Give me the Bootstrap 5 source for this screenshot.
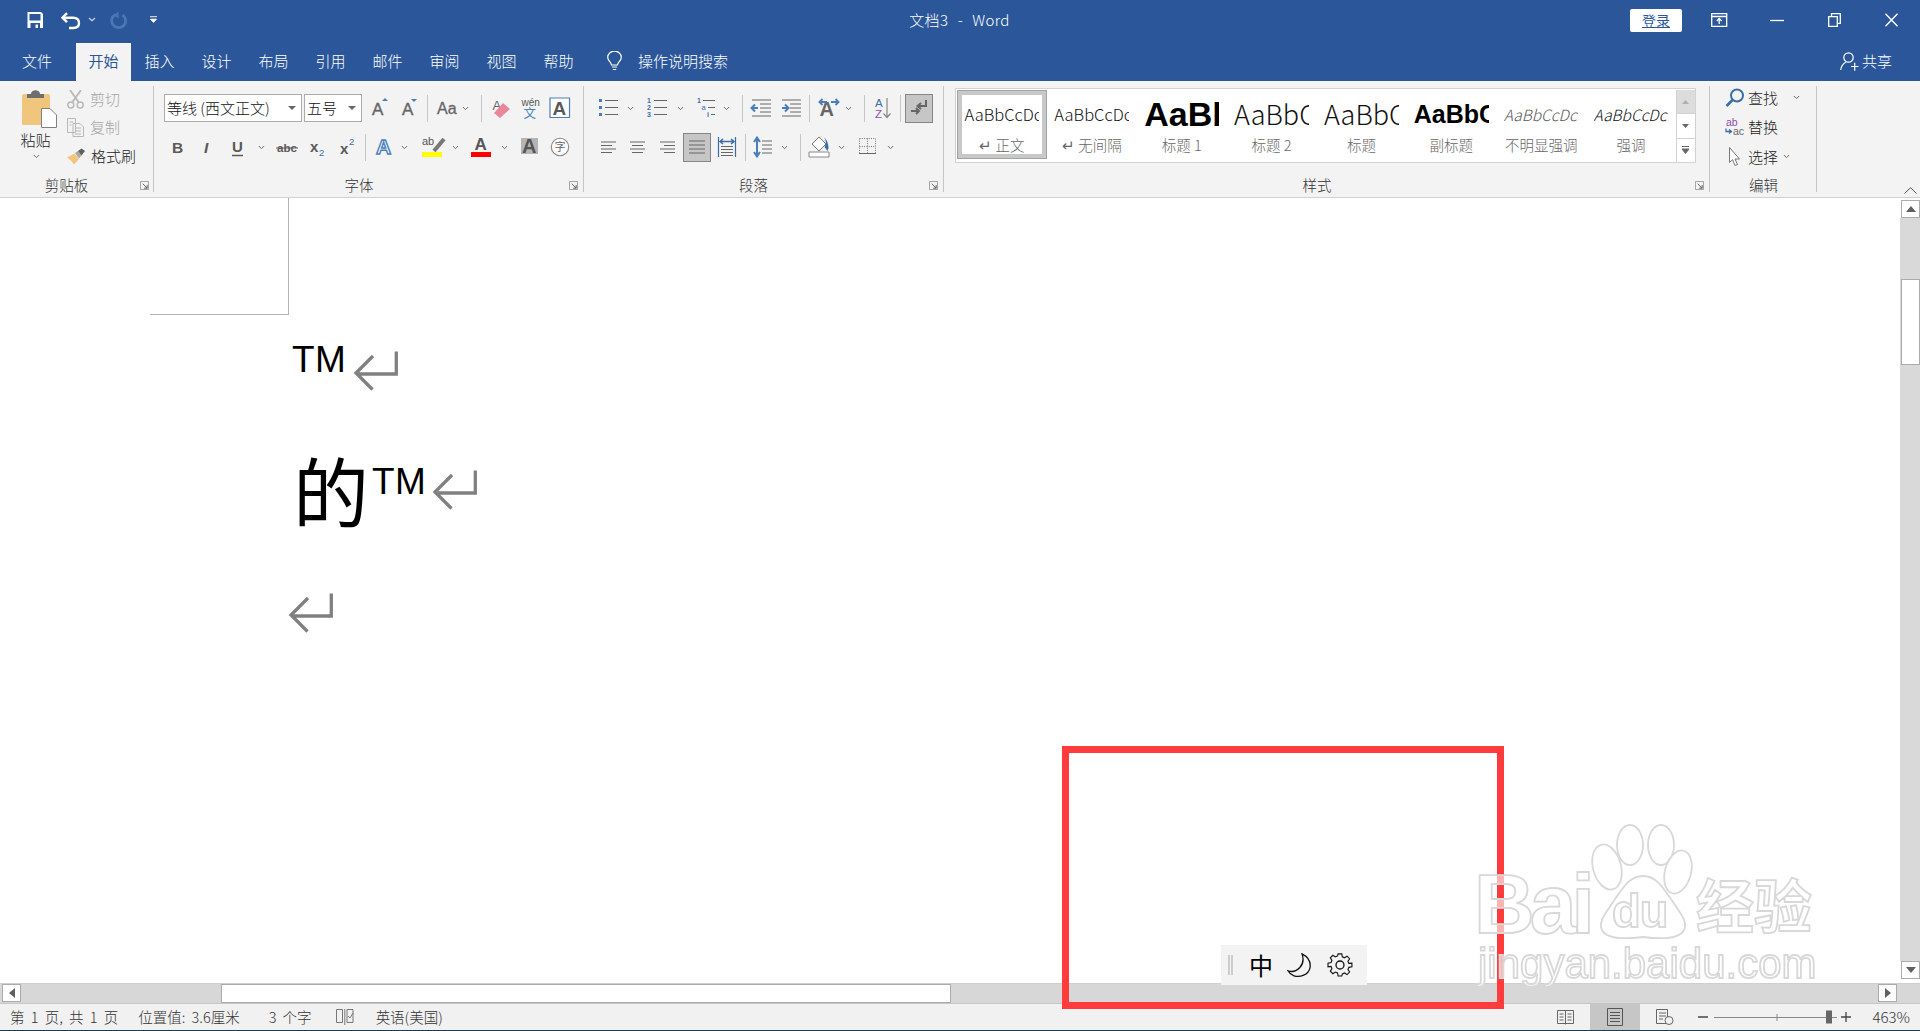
<!DOCTYPE html>
<html lang="zh-CN">
<head>
<meta charset="UTF-8">
<title>文档3 - Word</title>
<link href="https://cdn.jsdelivr.net/npm/bootstrap@5.3.0/dist/css/bootstrap.min.css" rel="stylesheet">
<style>
html,body{height:100%;margin:0;overflow:hidden}
body{font-family:"Noto Sans CJK SC","Liberation Sans",sans-serif;font-size:15px;color:#222;background:#fff}
svg{display:block;flex:none}
svg text{font-family:"Liberation Sans","Noto Sans CJK SC",sans-serif}
.app{position:relative;width:1920px;height:1031px;overflow:hidden}
.titlebar{height:43px;background:#2b579a;color:#fff;padding:0 22px 3px 27px}
.titlebar .side{flex:1 1 0}
.doc-title{font-weight:300;margin-right:6px;letter-spacing:.35px;word-spacing:1px}
.login{width:52px;height:23px;background:#fff;color:#2b579a;border-radius:2px;font-size:14px;line-height:23px;text-align:center;margin-right:29px;text-decoration:underline}
.win{gap:44px}
.win svg:first-child{margin-right:-2px}
.tabs{height:38px;background:#2b579a;color:#fff;padding-left:8px}
.tab{width:57px;text-align:center;line-height:36px;font-weight:300}
.tab.first{width:58px;margin-right:10px}
.tab.active{width:55px;background:#f3f3f3;color:#2b579a;font-weight:400}
.search{margin-left:20px;gap:16px;font-weight:300;padding-bottom:2px}
.share{margin-left:auto;margin-right:28px;gap:3px;font-weight:300;padding-bottom:2px}
.ribbon{height:117px;background:#f3f3f3;border-bottom:1px solid #d2d2d2}
.grp{height:106px;margin-top:5px;border-right:1.5px solid #c6c6c6;display:flex;flex-direction:column}
.g-clip{width:154px}.g-font{width:430px;padding:8px 0 0 10px}.g-para{width:360px;padding-top:8px}.g-style{width:766px;padding:2px 0 0 11px}.g-edit{width:107px;padding:0 0 0 15px}
.lbl{margin-top:auto;display:flex;align-items:center;height:14px;line-height:14px;font-size:14.5px;color:#333;font-weight:300;padding-right:4px}
.lbl span{flex:1;text-align:center;padding-right:5px}
.g-clip .lbl span{padding-right:7px}
.g-font .lbl{margin-left:-10px}
.g-para .lbl span{padding-right:6px}
.g-style .lbl{margin-left:-11px}
.rrow{height:28px;display:flex;align-items:center}
.rrow+.rrow{margin-top:11px}
.vsep{width:1px;height:27px;background:#c6c6c6;flex:none}
.sel{height:28px;background:#fff;border:1px solid #ababab;font-size:15px;line-height:26px;padding-left:2px;color:#111;position:relative;flex:none;font-weight:300}
.sel.name{width:138px;margin-right:2px}.sel.size{width:58px}
.caret{position:absolute;right:5px;top:11px;width:0;height:0;border:4px solid transparent;border-top:4px solid #666;border-bottom:0}
.on{background:#c6c6c6;border:1px solid #868686;height:29px;width:28px;flex:none;display:flex;align-items:center;justify-content:center}
.paste{width:61px;margin-left:6px;padding-top:4px;font-size:15px;line-height:20px;text-align:center;font-weight:300}
.paste svg{margin:0 auto 2px}.paste svg+span{display:block;margin-left:-2px}
.clip-cmds{font-weight:300;margin-top:-1px}
.cmd{height:28px;gap:6px}
.cmd:last-child{margin-top:1px}
.cmd.off{color:#a6a6a6}
.gallery{width:741px;height:75px;background:#fff;border:1px solid #d2d2d2;display:flex;padding:1px 0 0 1px}
.stl{width:90px;height:69px;display:flex;flex-direction:column;align-items:center;padding:0 7px}
.stl.cur{box-shadow:inset 0 0 0 1px #a3a3a3,inset 0 0 0 5px #c8c8c8}
.pv{width:75px;height:50px;line-height:48px;overflow:hidden;white-space:nowrap;font-size:16.5px;font-weight:300;color:#111}
.pv-h1{font-family:"Liberation Sans",sans-serif;font-size:34px;font-weight:700;color:#000}
.pv-h2{font-size:27px}
.pv-sub{font-family:"Liberation Sans",sans-serif;font-size:25px;font-weight:700;color:#000}
.pv-em{font-style:italic;font-size:15.5px}.pv-faint{color:#595959}
.cap{margin-top:-3px;font-size:14.5px;line-height:16px;color:#666;white-space:nowrap;font-weight:300}
.gscroll{width:19px;display:flex;flex-direction:column;height:73px;border-left:1px solid #d2d2d2}
.gscroll div{flex:1;display:flex;align-items:center;justify-content:center;border-bottom:1px solid #d2d2d2}
.gscroll div:first-child{background:#dcdcdc}
.edit-rows{margin-top:-3px}
.edit-row{height:29.5px;font-weight:300}
.edit-row svg:first-child{margin-right:3px}
.edit-row .far{margin-left:15px}
.edit-row .near{margin-left:5px}
.collapse-btn{margin:0 3px 3px 0}
.editor{height:785px}
.page{flex:1;min-width:0;background:#fff}
.crop{width:139px;height:117px;margin-left:150px;border-right:1.5px solid #b4b4b4;border-bottom:1.5px solid #b4b4b4}
.tm{font-family:"Liberation Sans",sans-serif;font-size:37px;color:#000;line-height:36px;letter-spacing:.5px}
.para1{margin:27px 0 0 292px;height:49px}
.para1 svg{margin:9px 0 0 7px}
.para2{margin:61px 0 0 293px;height:80px}
.para2 .big{font-size:76px;line-height:80px;color:#000;margin-top:-3px}
.para2 .tm{margin:12px 0 0 3px}
.para2 svg{margin:18px 0 0 6px}
.para3{margin:61px 0 0 288px}
.vscroll{width:20px;padding-top:2px}
.sb-btn{width:19px;height:18px;background:#fff;border:1px solid #ababab;display:flex;align-items:center;justify-content:center;flex:none}
.vtrack{flex:1;background:#d9d9d9;padding-top:61px}
.vthumb{height:86px;width:19px;background:#fff;border:1px solid #ababab;margin-left:1px}
.vscroll .sb-btn{margin-left:1px}
.vscroll .sb-btn:last-child{margin-bottom:4px}
.hscroll{height:20px;background:#d7d7d7;padding:0 23px 1px 2px;border-top:1px solid #cfcfcf}
.hthumb{width:730px;height:19px;background:#fff;border:1px solid #ababab;margin-left:200px}
.hscroll .sb-btn:last-child{margin-left:auto}
.status{height:28px;background:#f1f1f1;border-top:1px solid #c6c6c6;border-bottom:1px solid #1d3a4f;font-size:14.5px;word-spacing:3px;font-weight:300;color:#333;padding-left:10px;line-height:26px}
.status .s1{margin-right:20px}.status .s2{margin-right:29px}.status .s3{margin-right:24px}.status .s4{margin-left:22px}
.view-on{width:50px;height:26px;background:#c6c6c6;display:flex;align-items:center;justify-content:center}
.status .right{margin-left:auto;padding-right:10px}
.zoompct{font-size:15px;margin-left:14px}
.ime{position:absolute;left:1221px;top:945px;width:146px;height:40px;background:#f3f3f3;padding-left:7px}
.ime>*+*{margin-left:14px}
.redbox{position:absolute;left:1062px;top:746px;width:442px;height:263px;border:7px solid #ff3b3b;pointer-events:none}
.watermark{position:absolute;left:1470px;top:820px;pointer-events:none;filter:blur(.4px)}
.watermark .t{fill:rgba(255,255,255,.62);stroke:#d8d8d8;stroke-width:1.8}
</style>
</head>
<body>
<svg width="0" height="0" class="position-absolute">
  <symbol id="chev" viewBox="0 0 8 5"><path d="M1 .8l3 3 3-3" fill="none" stroke="#666" stroke-width="1.100"/></symbol>
  <symbol id="ret" viewBox="0 0 45 40"><path d="M43.300 .5V23H4M20 5 3 22l16.500 16.500" fill="none" stroke="#808080" stroke-width="3.300"/></symbol>
  <symbol id="launch" viewBox="0 0 10 10"><path d="M.5.500h9v9h-9z" fill="#f3f3f3" stroke="#999"/><path d="M3 3l5 5M8 4.500V8H4.500" fill="none" stroke="#555"/></symbol>
</svg>
<div class="app d-flex flex-column">
  <!-- title bar -->
  <div class="titlebar d-flex align-items-center">
    <div class="side d-flex align-items-center">
      <svg width="34" height="20" viewBox="0 0 34 20"><path d="M.5 2h13.500l2 2v14H.5z" fill="#fff"/><path d="M2.500 4h11v6.500h-11zM3.500 13h9.500v5H3.500z" fill="#2b579a"/><path d="M8.500 14.500H11V18H8.500z" fill="#fff"/></svg>
      <svg width="49" height="20" viewBox="0 0 49 20"><path d="M6 3.200 1.500 7.700 6 12.200" fill="none" stroke="#fff" stroke-width="2.400"/><path d="M1.500 7.700H12c4 0 6 2.300 6 5.300s-2 5-6 5H8" fill="none" stroke="#fff" stroke-width="2.400"/><path d="M28 8l3 2.800L34 8" fill="none" stroke="#c8d4e8" stroke-width="1.200"/></svg>
      <svg width="40" height="20" viewBox="0 0 40 20"><path d="M5.500 4.400A7 7 0 1 0 12.500 4.800" fill="none" stroke="#4a76b4" stroke-width="2.800"/><path d="M8.500 1.500v7L4 5.200z" fill="#4a76b4"/></svg>
      <svg width="8" height="8" viewBox="0 0 8 8"><path d="M0 .7h7M.5 3.200h6l-3 3.300z" fill="#fff" stroke="#fff" stroke-width=".9"/></svg>
    </div>
    <div class="doc-title">文档3&nbsp; - &nbsp;Word</div>
    <div class="side d-flex align-items-center justify-content-end">
      <div class="login">登录</div>
      <div class="d-flex align-items-center win">
        <svg width="17" height="14" viewBox="0 0 17 14"><path d="M.7.700h15v12.600H.7zM.7 3.500h15" fill="none" stroke="#fff" stroke-width="1.300"/><path d="M8.200 11V6M5.800 8l2.400-2.500L10.700 8" fill="none" stroke="#fff" stroke-width="1.300"/></svg>
        <svg width="14" height="14" viewBox="0 0 14 14"><path d="M0 7.500h14" stroke="#fff" stroke-width="1.300"/></svg>
        <svg width="13" height="14" viewBox="0 0 13 14"><path d="M.7 3.700h8.600v9.600H.7zM3.500 3.500V.7h8.800v9.600H9.500" fill="none" stroke="#fff" stroke-width="1.300"/></svg>
        <svg width="13" height="14" viewBox="0 0 13 14"><path d="M.5.700l12 12.600M12.500.700l-12 12.600" stroke="#fff" stroke-width="1.400"/></svg>
      </div>
    </div>
  </div>
  <!-- tabs -->
  <div class="tabs d-flex align-items-stretch">
    <div class="tab first">文件</div>
    <div class="tab active">开始</div>
    <div class="tab">插入</div>
    <div class="tab">设计</div>
    <div class="tab">布局</div>
    <div class="tab">引用</div>
    <div class="tab">邮件</div>
    <div class="tab">审阅</div>
    <div class="tab">视图</div>
    <div class="tab">帮助</div>
    <div class="search d-flex align-items-center">
      <svg width="15" height="20" viewBox="0 0 15 20"><path d="M4.500 14c0-3-3.800-4-3.800-7.800a6.800 6 0 0 1 13.600 0c0 3.800-3.800 4.800-3.800 7.800zM5 16h5M5.800 18.500h3.400" fill="none" stroke="#fff" stroke-width="1.200"/></svg>
      <span>操作说明搜索</span>
    </div>
    <div class="share d-flex align-items-center">
      <svg width="19" height="19" viewBox="0 0 19 19"><circle cx="8.500" cy="5.500" r="4.700" fill="none" stroke="#fff" stroke-width="1.200"/><path d="M.7 18c.5-4 2.500-6.500 5-7.800M11 14.500h7.500M14.700 10.800v8" fill="none" stroke="#fff" stroke-width="1.200"/></svg>
      <span>共享</span>
    </div>
  </div>
  <!-- ribbon -->
  <div class="ribbon d-flex">
    <div class="grp g-clip">
      <div class="d-flex">
        <div class="paste">
          <svg class="ms-3" width="35" height="38" viewBox="0 0 35 38"><rect x="0" y="4" width="28" height="31" rx="1.500" fill="#efc67b"/><path d="M5 8V4h4c0-5 9-5 9 0h4v4z" fill="#6e6e6e"/><path d="M19.500 18.500h8.500l6.500 6.500v12.500h-15z" fill="#fff" stroke="#808080"/></svg>
          <span>粘贴</span>
          <svg class="mx-auto mt-1" width="7" height="5"><use href="#chev" width="7" height="5"/></svg>
        </div>
        <div class="clip-cmds">
          <div class="cmd off d-flex align-items-center">
            <svg width="17" height="19" viewBox="0 0 17 19"><path d="M3 0l8.500 12M14 0 5.500 12" fill="none" stroke="#b8b8b8" stroke-width="1.800"/><circle cx="3.800" cy="15" r="3" fill="none" stroke="#b8b8b8" stroke-width="1.500"/><circle cx="13.200" cy="15" r="3" fill="none" stroke="#b8b8b8" stroke-width="1.500"/></svg>
            <span>剪切</span>
          </div>
          <div class="cmd off d-flex align-items-center">
            <svg width="17" height="19" viewBox="0 0 17 19"><path d="M.5.500h8v14h-8zM6 5.500h7l3.500 3.500v9.500H6z" fill="#f3f3f3" stroke="#b8b8b8"/><path d="M2.500 4h4M2.500 7h2M8 10h6M8 13h6M8 16h6" stroke="#b8b8b8"/></svg>
            <span>复制</span>
          </div>
          <div class="cmd d-flex align-items-center">
            <svg width="18" height="17" viewBox="0 0 18 17"><path d="M0 9.500 7.500 5.500l4.500 5.500-5 5.500C5 13 2 11 0 9.500z" fill="#efc67b"/><path d="M8 5l3-2 3.500 4.500-2.500 3z" fill="#a8a8a8"/><path d="M11 3 14.500 .5 18 3l-3.500 4.500z" fill="#5f5f5f"/></svg>
            <span>格式刷</span>
          </div>
        </div>
      </div>
      <div class="lbl"><span>剪贴板</span><svg width="9" height="9"><use href="#launch" width="9" height="9"/></svg></div>
    </div>

    <div class="grp g-font">
      <div class="rrow">
        <div class="sel name">等线 (西文正文)<i class="caret"></i></div>
        <div class="sel size">五号<i class="caret"></i></div>
        <svg width="37" height="28" viewBox="0 0 37 28"><text x="10" y="21" font-size="17" fill="#666" stroke="#666" stroke-width=".4">A</text><path d="M20 7h6l-3-3z" fill="#4a7ebb"/></svg>
        <svg width="28" height="28" viewBox="0 0 28 28"><text x="3" y="21" font-size="17" fill="#666" stroke="#666" stroke-width=".4">A</text><path d="M12 5h6l-3 3z" fill="#4a7ebb"/></svg>
        <div class="vsep"></div>
        <svg width="53" height="28" viewBox="0 0 53 28"><text x="9" y="20" font-size="16" fill="#666" stroke="#666" stroke-width=".3">Aa</text><use href="#chev" x="34" y="12" width="7" height="5"/></svg>
        <div class="vsep"></div>
        <svg width="38" height="28" viewBox="0 0 38 28"><text x="10.500" y="16" font-size="13" fill="#666">A</text><path d="M21 9l7 6-10 9-6-5z" fill="#e8879a"/></svg>
        <svg width="29" height="28" viewBox="0 0 29 28"><text x="1.500" y="12" font-size="10" fill="#555">wén</text><text x="3.500" y="24" font-size="12.500" fill="#4a86c0">文</text></svg>
        <svg width="22" height="22" viewBox="0 0 22 22"><path d="M1 1h19.500v19.500H1z" fill="#fff" stroke="#4a7ebb" stroke-width="1.200"/><text x="3.500" y="18" font-size="19" font-weight="700" fill="#595959">A</text></svg>
      </div>
      <div class="rrow">
        <svg width="34" height="28" viewBox="0 0 34 28"><text x="8" y="20" font-size="15.500" font-weight="700" fill="#595959">B</text></svg>
        <svg width="28" height="28" viewBox="0 0 28 28"><text x="6" y="20" font-size="15.500" font-weight="700" font-style="italic" fill="#595959">I</text></svg>
        <svg width="46" height="28" viewBox="0 0 46 28"><text x="6" y="19" font-size="15" font-weight="700" fill="#595959">U</text><path d="M6 22.500h11" stroke="#595959" stroke-width="1.500"/><use href="#chev" x="32" y="12" width="7" height="5"/></svg>
        <svg width="33" height="28" viewBox="0 0 33 28"><text x="5" y="19" font-size="11.500" font-weight="700" fill="#595959">abc</text><path d="M4 15h22" stroke="#595959"/></svg>
        <svg width="30" height="28" viewBox="0 0 30 28"><text x="5" y="19" font-size="15" font-weight="700" fill="#595959">x</text><text x="14" y="23" font-size="9.500" fill="#3a6ea5">2</text></svg>
        <svg width="30" height="28" viewBox="0 0 30 28"><text x="5" y="21" font-size="15" font-weight="700" fill="#595959">x</text><text x="14" y="12" font-size="9.500" fill="#3a6ea5">2</text></svg>
        <div class="vsep"></div>
        <svg width="52" height="28" viewBox="0 0 52 28"><text x="10" y="21" font-size="21" font-weight="700" fill="#fff" stroke="#4a7ebb" stroke-width="1.400">A</text><use href="#chev" x="35" y="12" width="7" height="5"/></svg>
        <svg width="47" height="28" viewBox="0 0 47 28"><text x="4" y="12" font-size="11" fill="#555">ab</text><path d="M16 18 26 6" stroke="#777" stroke-width="4"/><path d="M4 19h20v5H4z" fill="#ff0"/><use href="#chev" x="34" y="12" width="7" height="5"/></svg>
        <svg width="50" height="28" viewBox="0 0 50 28"><text x="9.500" y="16.500" font-size="17" font-weight="700" fill="#555">A</text><path d="M6 19h20v5H6z" fill="#f00"/><use href="#chev" x="36" y="12" width="7" height="5"/></svg>
        <svg width="32" height="28" viewBox="0 0 32 28"><path d="M6 5h17v16H6z" fill="#b4b4b4"/><text x="7" y="20" font-size="20" font-weight="700" fill="#555">A</text></svg>
        <svg width="24" height="24" viewBox="0 0 24 24"><circle cx="13" cy="12" r="8.700" fill="#fff" stroke="#888" stroke-width="1.100"/><text x="7.500" y="16" font-size="11" fill="#666">字</text></svg>
      </div>
      <div class="lbl"><span>字体</span><svg width="10" height="9"><use href="#launch" width="9" height="9"/></svg></div>
    </div>

    <div class="grp g-para">
      <div class="rrow">
        <svg width="56" height="28" viewBox="0 0 56 28"><path d="M15 5h3v3h-3zM15 12h3v3h-3zM15 19h3v3h-3z" fill="#4a7ebb"/><path d="M21 6.500h13M21 13.500h13M21 20.500h13" stroke="#666"/><use href="#chev" x="43" y="12" width="7" height="5"/></svg>
        <svg width="50" height="28" viewBox="0 0 50 28"><text x="7" y="9" font-size="7" font-weight="700" fill="#3a6ea5">1</text><text x="7" y="16" font-size="7" font-weight="700" fill="#3a6ea5">2</text><text x="7" y="23" font-size="7" font-weight="700" fill="#3a6ea5">3</text><path d="M14 6.500h13M14 13.500h13M14 20.500h13" stroke="#666"/><use href="#chev" x="37" y="12" width="7" height="5"/></svg>
        <svg width="52" height="28" viewBox="0 0 52 28"><text x="7" y="9" font-size="7" font-weight="700" fill="#3a6ea5">1</text><text x="11.500" y="16" font-size="7.500" fill="#3a6ea5">a</text><text x="17" y="23" font-size="7" font-weight="700" fill="#3a6ea5">i</text><path d="M13 6.500h12M18 13.500h7M21 20.500h4" stroke="#666"/><use href="#chev" x="33" y="12" width="7" height="5"/></svg>
        <div class="vsep"></div>
        <svg width="34" height="28" viewBox="0 0 34 28"><path d="M9 6h19M17 10h11M17 14h11M17 18h11M9 22h19" stroke="#666"/><path d="M15 14H9M12 10.500 8.500 14l3.500 3.500" fill="none" stroke="#4a7ebb" stroke-width="2"/></svg>
        <svg width="32" height="28" viewBox="0 0 32 28"><path d="M5 6h19M13 10h11M13 14h11M13 18h11M5 22h19" stroke="#666"/><path d="M5 14h6M8 10.500l3.500 3.500L8 17.500" fill="none" stroke="#4a7ebb" stroke-width="2"/></svg>
        <div class="vsep"></div>
        <svg width="54" height="28" viewBox="0 0 54 28"><text x="9.500" y="22" font-size="20" font-weight="700" fill="#666">A</text><path d="M10 8h7M12.500 5l-3 3 3 3M21 8h7M25.500 5l3 3-3 3" fill="none" stroke="#4a7ebb" stroke-width="1.900"/><use href="#chev" x="35" y="12" width="7" height="5"/></svg>
        <div class="vsep"></div>
        <svg width="35" height="28" viewBox="0 0 35 28"><text x="10" y="13" font-size="11.500" fill="#3a6ea5">A</text><text x="10" y="24" font-size="11.500" fill="#8d4fb0">Z</text><path d="M22 4v19M18.500 19.500l3.500 4 3.500-4" fill="none" stroke="#888" stroke-width="1.200"/></svg>
        <div class="vsep"></div>
        <div class="on ms-1"><svg width="20" height="18" viewBox="0 0 20 18"><path d="M17 1v6h-8M12 4 8.500 7 12 10" fill="none" stroke="#666" stroke-width="2"/><path d="M2 12h8M7 9l3 3-3 3" fill="none" stroke="#666" stroke-width="2"/></svg></div>
      </div>
      <div class="rrow">
        <svg width="38" height="28" viewBox="0 0 38 28"><path d="M17 9h15M17 12.500h11M17 16h15M17 19.500h11" stroke="#666"/></svg>
        <svg width="30" height="28" viewBox="0 0 30 28"><path d="M8 9h15M10 12.500h11M8 16h15M10 19.500h11" stroke="#666"/></svg>
        <svg width="31" height="28" viewBox="0 0 31 28"><path d="M8 9h15M12 12.500h11M8 16h15M12 19.500h11" stroke="#666"/></svg>
        <div class="on"><svg width="16" height="14" viewBox="0 0 16 14"><path d="M0 1h16M0 5h16M0 9h16M0 13h16" stroke="#666"/></svg></div>
        <svg width="34" height="28" viewBox="0 0 34 28"><path d="M10 13.500h12M10 16.500h12M10 19.500h12M10 22.500h12" stroke="#666"/><path d="M7.500 4v20M24.500 4v20" stroke="#3a6ea5" stroke-width="1.200"/><path d="M9 8.500h14M12 6l-3 2.500 3 2.500M20 6l3 2.500-3 2.500" fill="none" stroke="#3a6ea5" stroke-width="1.500"/></svg>
        <div class="vsep"></div>
        <svg width="54" height="28" viewBox="0 0 54 28"><path d="M16 8h10M16 12h10M16 16h10M16 20h10" stroke="#666"/><path d="M11 5v18M8 9l3-4.500L14 9M8 19l3 4.500 3-4.500" fill="none" stroke="#4a7ebb" stroke-width="2"/><use href="#chev" x="35" y="12" width="7" height="5"/></svg>
        <div class="vsep"></div>
        <svg width="50" height="28" viewBox="0 0 50 28"><path d="M8 19h20v5H8z" fill="#fff" stroke="#888"/><path d="M11 11l7-7 7 7-7 7z" fill="#fff" stroke="#777"/><path d="M19 3c3 0 6 2 6 8l-1.500 3 3 4 1-3c0-5-2-11-8.500-12z" fill="#3a6ea5"/><use href="#chev" x="37" y="12" width="7" height="5"/></svg>
        <svg width="46" height="28" viewBox="0 0 46 28"><path d="M8.500 5.500h16M8.500 13.500h16M8.500 5.500v15M16.500 5.500v15M24.500 5.500v15" stroke="#777" stroke-dasharray="1 1.300"/><path d="M8 20.500h17" stroke="#666"/><use href="#chev" x="36" y="12" width="7" height="5"/></svg>
      </div>
      <div class="lbl"><span>段落</span><svg width="10" height="9"><use href="#launch" width="9" height="9"/></svg></div>
    </div>

    <div class="grp g-style">
      <div class="gallery">
        <div class="stl cur"><div class="pv">AaBbCcDc</div><div class="cap">↵ 正文</div></div>
        <div class="stl"><div class="pv">AaBbCcDc</div><div class="cap">↵ 无间隔</div></div>
        <div class="stl"><div class="pv pv-h1">AaBb</div><div class="cap">标题 1</div></div>
        <div class="stl"><div class="pv pv-h2">AaBbC</div><div class="cap">标题 2</div></div>
        <div class="stl"><div class="pv pv-h2">AaBbC</div><div class="cap">标题</div></div>
        <div class="stl"><div class="pv pv-sub">AaBbC</div><div class="cap">副标题</div></div>
        <div class="stl"><div class="pv pv-em pv-faint">AaBbCcDc</div><div class="cap">不明显强调</div></div>
        <div class="stl"><div class="pv pv-em">AaBbCcDc</div><div class="cap">强调</div></div>
        <div class="gscroll">
          <div><svg width="7" height="4"><path d="M0 4h7L3.500 0z" fill="#b0b0b0"/></svg></div>
          <div><svg width="7" height="4"><path d="M0 0h7L3.500 4z" fill="#666"/></svg></div>
          <div><svg width="9" height="8"><path d="M1 .5h7M1 3h7L4.500 7.500z" fill="#666" stroke="#666"/></svg></div>
        </div>
      </div>
      <div class="lbl"><span>样式</span><svg width="10" height="9"><use href="#launch" width="9" height="9"/></svg></div>
    </div>

    <div class="grp g-edit">
      <div class="edit-rows">
        <div class="edit-row d-flex align-items-center">
          <svg width="20" height="19" viewBox="0 0 20 19"><circle cx="12" cy="7.500" r="6" fill="none" stroke="#3a6ea5" stroke-width="2"/><path d="M7.500 12 1.500 18" stroke="#3a6ea5" stroke-width="2.600"/></svg>
          <span>查找</span>
          <svg class="far" width="7" height="5"><use href="#chev" width="7" height="5"/></svg>
        </div>
        <div class="edit-row d-flex align-items-center">
          <svg width="20" height="18" viewBox="0 0 20 18"><text x="1" y="8" font-size="10.500" fill="#8d4fb0">ab</text><text x="8" y="17" font-size="10.500" fill="#666">ac</text><path d="M1 10.500v3h5M4 11.500l2.500 2L4 15.500" fill="none" stroke="#3a6ea5" stroke-width="1.300"/></svg>
          <span>替换</span>
        </div>
        <div class="edit-row d-flex align-items-center">
          <svg width="20" height="19" viewBox="0 0 20 19"><path d="M4.500.5v15l3-3 2.500 6 2.500-1-2.500-5.500h4.500z" fill="#fff" stroke="#777"/></svg>
          <span>选择</span>
          <svg class="near" width="7" height="5"><use href="#chev" width="7" height="5"/></svg>
        </div>
      </div>
      <div class="lbl"><span class="text-start ps-4">编辑</span></div>
    </div>
    <div class="flex-grow-1 d-flex justify-content-end align-items-end">
      <svg class="collapse-btn" width="13" height="7" viewBox="0 0 13 7"><path d="M.5 6.500 6.500.7l6 5.800" fill="none" stroke="#555"/></svg>
    </div>
  </div>

  <!-- document -->
  <div class="editor d-flex">
    <div class="page">
      <div class="crop"></div>
      <div class="para1 d-flex"><span class="tm">TM</span><svg width="45" height="40"><use href="#ret" width="45" height="40"/></svg></div>
      <div class="para2 d-flex"><span class="big">的</span><span class="tm">TM</span><svg width="45" height="40"><use href="#ret" width="45" height="40"/></svg></div>
      <div class="para3"><svg width="45" height="40"><use href="#ret" width="45" height="40"/></svg></div>
    </div>
    <div class="vscroll d-flex flex-column">
      <div class="sb-btn"><svg width="10" height="6"><path d="M0 6h10L5 0z" fill="#606060"/></svg></div>
      <div class="vtrack"><div class="vthumb"></div></div>
      <div class="sb-btn"><svg width="10" height="6"><path d="M0 0h10L5 6z" fill="#606060"/></svg></div>
    </div>
  </div>
  <div class="hscroll d-flex align-items-start">
    <div class="sb-btn"><svg width="6" height="10"><path d="M6 0v10L0 5z" fill="#606060"/></svg></div>
    <div class="hthumb"></div>
    <div class="sb-btn"><svg width="6" height="10"><path d="M0 0v10l6-5z" fill="#606060"/></svg></div>
  </div>
  <!-- status bar -->
  <div class="status d-flex align-items-center">
    <span class="s1">第 1 页, 共 1 页</span>
    <span class="s2">位置值: 3.6厘米</span>
    <span class="s3">3 个字</span>
    <svg width="18" height="16" viewBox="0 0 18 16"><path d="M.5.500h6v13h-6zM11 .5h6v13h-6z" fill="none" stroke="#777"/><path d="M8.800 0v16" stroke="#777"/><path d="M12 7l2 2 3-5" fill="none" stroke="#777"/></svg>
    <span class="s4">英语(美国)</span>
    <div class="right d-flex align-items-center">
      <svg width="33" height="15" viewBox="0 0 33 15"><path d="M.5.500h16v13h-16zM8.500.5v14M2.500 4h4M2.500 7h4M2.500 10h4M10.500 4h4M10.500 7h4M10.500 10h4" fill="none" stroke="#666"/></svg>
      <div class="view-on"><svg width="16" height="18" viewBox="0 0 16 18"><path d="M.5.500h15v17H.5zM3 4.500h10M3 7.500h10M3 10.500h10M3 13.500h10" fill="none" stroke="#555"/></svg></div>
      <svg class="ms-3" width="18" height="16" viewBox="0 0 18 16"><path d="M.5.500h11v14H.5zM3 4h7M3 7h7M3 10h4" fill="none" stroke="#666"/><circle cx="13" cy="11.500" r="4" fill="#f1f1f1" stroke="#666"/></svg>
      <svg class="ms-4" width="160" height="16" viewBox="0 0 160 16"><path d="M16 8.500h123M79 5v7" stroke="#888"/><path d="M0 8h10" stroke="#444" stroke-width="1.500"/><path d="M128 1.500h6v13h-6z" fill="#666"/><path d="M143 8h10M148 3v10" stroke="#444" stroke-width="1.300"/></svg>
      <span class="zoompct">463%</span>
    </div>
  </div>

  <!-- floating input bar, annotation and watermark lie over the window -->
  <div class="ime d-flex align-items-center">
    <svg width="7" height="20" viewBox="0 0 7 20"><path d="M1 0v20M4 0v20" stroke="#b4b4b4" stroke-width="1.200"/></svg>
    <span class="fs-4 text-black lh-1">中</span>
    <svg width="26" height="25" viewBox="0 0 26 25"><path d="M15 .8c6 3 9 8 8 14-1.500 7-10 10-16 8-3-1-5-3-6-5 9 3 18-6 14-17z" fill="none" stroke="#111" stroke-width="1.300"/></svg>
    <svg width="26" height="26" viewBox="0 0 26 26"><circle cx="13" cy="13" r="4" fill="none" stroke="#111" stroke-width="1.300"/><path d="M11 1h4l.6 3.200 2.400 1 2.700-1.800 2.800 2.800-1.800 2.700 1 2.400L26 11v4l-3.300.6-1 2.400 1.800 2.700-2.800 2.800-2.700-1.800-2.400 1L15 25h-4l-.6-3.300-2.400-1-2.700 1.800-2.800-2.800 1.800-2.700-1-2.400L0 15v-4l3.300-.6 1-2.400L2.500 5.300l2.800-2.800L8 4.200l2.400-1z" fill="none" stroke="#111" stroke-width="1.200" transform="translate(1 1) scale(.92)"/></svg>
  </div>
  <div class="redbox"></div>
  <svg class="watermark" width="360" height="175" viewBox="0 0 360 175">
    <text class="t" x="4" y="113" font-size="84" font-weight="700" letter-spacing="-5">Bai</text>
    <ellipse class="t" cx="137" cy="47" rx="14" ry="23" transform="rotate(-15 137 47)"/>
    <ellipse class="t" cx="160" cy="25" rx="13" ry="20"/>
    <ellipse class="t" cx="191" cy="25" rx="13" ry="20"/>
    <ellipse class="t" cx="208" cy="52" rx="13" ry="22" transform="rotate(15 208 52)"/>
    <path class="t" d="M173 56c14 0 20 12 30 26 8 12 15 20 11 28-5 10-25 9-41 7-16 2-36 3-41-7-4-8 3-16 11-28 10-14 16-26 30-26z"/>
    <text class="t" x="142" y="107" font-size="47" font-weight="700" letter-spacing="-1">du</text>
    <text class="t" x="226" y="108" font-size="58" font-weight="700">经验</text>
    <text class="t" x="8" y="158" font-size="42">jingyan.baidu.com</text>
  </svg>
</div>
<script src="https://cdn.jsdelivr.net/npm/bootstrap@5.3.0/dist/js/bootstrap.bundle.min.js"></script>
</body>
</html>
